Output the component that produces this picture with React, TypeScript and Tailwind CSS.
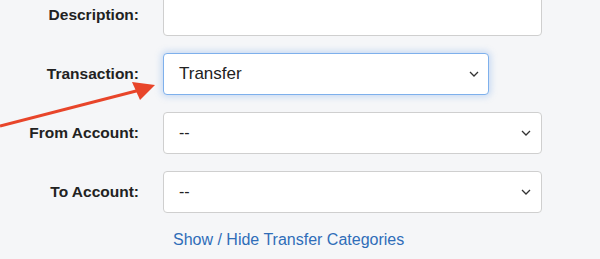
import React from "react"

const Chevron = () => (
  <svg width="10" height="6" viewBox="0 0 10 6" fill="none" className="shrink-0">
    <path d="M1 1l4 4 4-4" stroke="#333" strokeWidth="1.3" />
  </svg>
)

function Row({ label, children }: { label: string; children: React.ReactNode }) {
  return (
    <div className="flex items-center gap-[24px]">
      <label className="w-[139px] shrink-0 text-right text-[15.5px] font-bold text-[#222]">{label}</label>
      {children}
    </div>
  )
}

function Select({ value, focused, width }: { value: string; focused?: boolean; width: string }) {
  return (
    <div
      className={
        focused
          ? "flex h-[42px] items-center justify-between rounded-[4px] border border-[#7eb0ec] bg-white pl-[15px] pr-[9px] shadow-[0_0_6px_2px_rgba(120,170,235,0.35)] " + width
          : "flex h-[42px] items-center justify-between rounded-[4px] border border-[#cfcfcf] bg-white pl-[15px] pr-[10px] " + width
      }
    >
      <span className={focused ? "text-[17px] text-[#222]" : "text-[16px] text-[#222]"}>{value}</span>
      <Chevron />
    </div>
  )
}

export default function App() {
  return (
    <div className="relative h-[259px] w-[600px] overflow-hidden bg-[#f5f6f8] font-['Liberation_Sans',Arial,sans-serif]">
      <div className="-mt-[6px] flex flex-col gap-[17px]">
        <Row label="Description:">
          <div className="h-[42px] w-[379px] rounded-[4px] border border-[#cfcfcf] bg-white" />
        </Row>
        <Row label="Transaction:">
          <Select value="Transfer" focused width="w-[326px]" />
        </Row>
        <Row label="From Account:">
          <Select value="--" width="w-[379px]" />
        </Row>
        <Row label="To Account:">
          <Select value="--" width="w-[379px]" />
        </Row>
        <div className="-mt-[2px] pl-[173px]">
          <a className="text-[16px] text-[#2f6db8]">Show / Hide Transfer Categories</a>
        </div>
      </div>

      <svg className="absolute left-0 top-0" width="600" height="259" viewBox="0 0 600 259">
        <line x1="0" y1="126" x2="140" y2="90" stroke="#e8452a" strokeWidth="3" />
        <polygon points="155,85 132,82 140,100" fill="#e8452a" />
      </svg>
    </div>
  )
}
